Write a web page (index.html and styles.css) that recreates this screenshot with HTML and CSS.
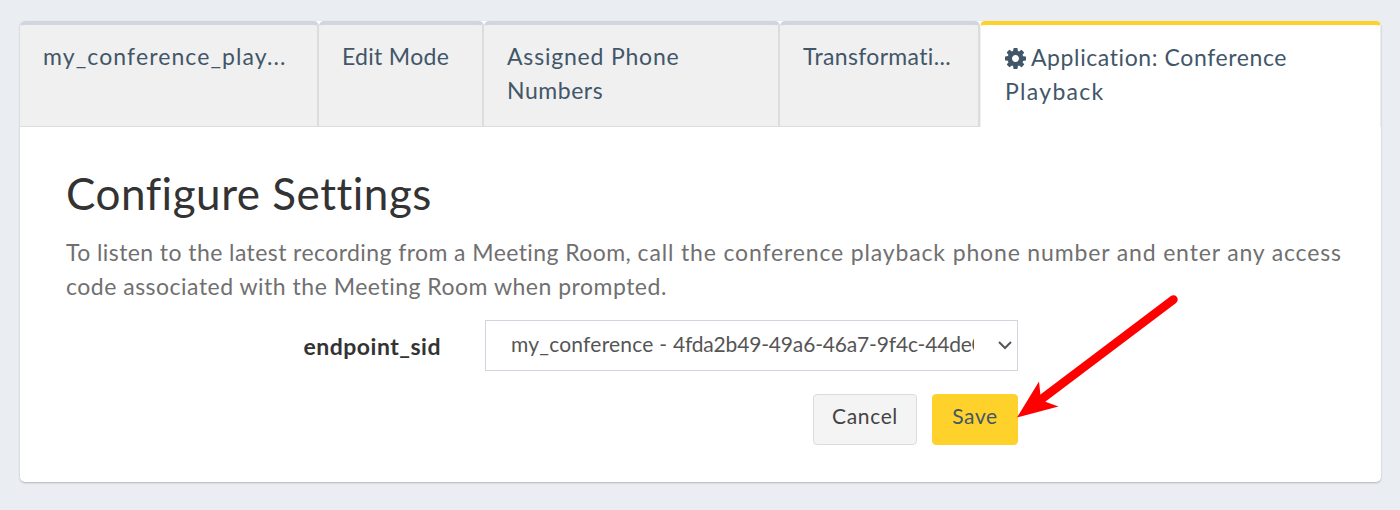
FILE: index.html
```
<!DOCTYPE html>
<html lang="en">
<head>
    <meta charset="UTF-8">
    <meta name="viewport" content="width=device-width, initial-scale=1.0">
    <title>Conference Playback</title>
    <link rel="stylesheet" href="styles.css">
</head>
<body>
    <div class="panel">
        <ul class="tabs">
            <li class="tab tab-name"><span>my_conference_play...</span></li>
            <li class="tab tab-mode"><span>Edit Mode</span></li>
            <li class="tab tab-numbers"><span class="assigned">Assigned Phone</span><br><span class="numbers">Numbers</span></li>
            <li class="tab tab-transform"><span>Transformati...</span></li>
            <li class="tab tab-app active">
                <svg class="cog" viewBox="128 128 1536 1536"><path d="M1152 896q0-106-75-181t-181-75-181 75-75 181 75 181 181 75 181-75 75-181zm512-109v222q0 12-8 23t-20 13l-185 28q-19 54-39 91 35 50 107 138 10 12 10 25t-9 23q-27 37-99 108t-94 71q-12 0-26-9l-138-108q-44 23-91 38-16 136-29 186-7 28-36 28h-222q-14 0-24.5-8.5t-11.5-21.5l-28-184q-49-16-90-37l-141 107q-10 9-25 9-14 0-25-11-126-114-165-168-7-10-7-23 0-12 8-23 15-21 51-66.5t54-70.5q-27-50-41-99l-183-27q-13-2-21-12.5t-8-23.5v-222q0-12 8-23t19-13l186-28q14-46 39-92-40-57-107-138-10-12-10-24 0-10 9-23 26-36 98.5-107.5t94.5-71.5q13 0 26 10l138 107q44-23 91-38 16-136 29-186 7-28 36-28h222q14 0 24.5 8.5t11.5 21.5l28 184q49 16 90 37l142-107q9-9 24-9 13 0 25 10 129 119 165 170 7 8 7 22 0 12-8 23-15 21-51 66.5t-54 70.5q26 50 41 98l183 28q13 2 21 12.5t8 23.5z"/></svg><span class="app">Application: Conference</span><br><span class="playback">Playback</span>
            </li>
        </ul>
        <div class="content">
            <h1>Configure Settings</h1>
            <p><span class="intro">To listen to the latest recording from a Meeting Room, </span><span class="line1">call the conference playback phone number and enter any access</span><br><span class="line2">code associated with the Meeting Room when prompted.</span></p>
            <form class="settings">
                <div class="row">
                    <label>endpoint_sid</label>
                    <div class="select">
                        <div class="value">my_conference - <span class="sid">4fda2b49-49a6-46a7-9f4c-44de0</span></div>
                        <svg class="chevron" viewBox="0 0 14 9"><path d="M1 1l6 6 6-6"/></svg>
                    </div>
                </div>
                <div class="buttons">
                    <button type="button" class="btn cancel">Cancel</button>
                    <button type="button" class="btn save">Save</button>
                </div>
            </form>
        </div>
    </div>
    <svg class="arrow" viewBox="0 0 170 130">
        <path class="shaft" d="M163.500 9.500L33 108"/>
        <path class="head" d="M7 127.500L29 91.500 30.500 105.500 36 112 48.500 116.500z"/>
    </svg>
</body>
</html>
```

FILE: styles.css
```
* {
    box-sizing: border-box;
}
body {
    margin: 0;
    padding: 21px 18px 0 20px;
    height: 510px;
    overflow: hidden;
    background-color: #eaeef3;
    font: 23px/34px Lato, "Open Sans", sans-serif;
    font-variant-ligatures: none;
    color: #333;
}
.panel {
    width: 1361px;
    height: 461px;
    background-color: white;
    border-radius: 5px;
    box-shadow: 0 1px 2px rgba(0, 0, 0, 0.25);
}
.tabs {
    display: flex;
    height: 106px;
    margin: 0;
    padding: 0;
    list-style: none;
    color: #425669;
}
.tab {
    flex: none;
    padding: 14px 0 0 23px;
    background-color: #f0f0f0;
    border-top: 4px solid #d1d5df;
    border-right: 2px solid #dcdcdc;
    border-bottom: 1px solid #dcdcdc;
    border-radius: 5px 5px 0 0;
    white-space: nowrap;
}
.tab-name {
    width: 299px;
    letter-spacing: 1.1px;
}
.tab-mode {
    width: 165px;
    letter-spacing: 0.3px;
}
.tab-numbers {
    width: 296px;
}
.assigned {
    letter-spacing: 0.8px;
}
.numbers {
    letter-spacing: 0.55px;
}
.tab-transform {
    width: 200px;
    letter-spacing: 0.35px;
}
.tab-app {
    width: 401px;
    padding: 15px 0 0 24px;
}
.app {
    letter-spacing: 0.6px;
}
.playback {
    letter-spacing: 1.3px;
}
.tab.active {
    background-color: white;
    border-top-color: #ffd12b;
    border-left: 1px solid #f0f0f0;
    border-right: 1px solid #ececec;
    border-bottom: none;
}
.cog {
    width: 21px;
    height: 21px;
    margin-right: 5px;
    vertical-align: -3px;
    fill: #425669;
}
.content {
    padding: 41px 46px 0;
}
h1 {
    margin: 0 0 16px;
    font-size: 44px;
    line-height: 51px;
    font-weight: 400;
    letter-spacing: 0.52px;
}
p {
    margin: 0;
    color: #707070;
    white-space: nowrap;
}
.intro {
    letter-spacing: 0.42px;
}
.line1 {
    letter-spacing: 0.85px;
}
.line2 {
    letter-spacing: 0.5px;
}
.settings {
    width: 952px;
    margin-top: 17px;
}
.row {
    display: flex;
    justify-content: flex-end;
    gap: 44px;
}
label {
    padding-top: 9px;
    font-weight: 700;
    letter-spacing: 0.5px;
}
.select {
    display: flex;
    align-items: center;
    justify-content: space-between;
    width: 533px;
    height: 51px;
    padding: 0 5px 0 25px;
    border: 1px solid #d1d5df;
    font-size: 21px;
    color: #555;
}
.value {
    width: 463px;
    margin-top: -3px;
    overflow: hidden;
    white-space: nowrap;
    letter-spacing: 0.22px;
}
.sid {
    letter-spacing: -0.17px;
}
.chevron {
    width: 14px;
    height: 9px;
    fill: none;
    stroke: #555;
    stroke-width: 2;
}
.buttons {
    display: flex;
    justify-content: flex-end;
    gap: 15px;
    margin-top: 23px;
}
.btn {
    height: 51px;
    padding: 0 0 9px;
    border: 1px solid #dcdcdc;
    border-radius: 4px;
    font: 21px Lato, "Open Sans", sans-serif;
    letter-spacing: 0.65px;
}
.cancel {
    width: 104px;
    background-color: #f4f4f4;
    color: #444;
}
.save {
    width: 86px;
    background-color: #ffd12b;
    border-color: #ffd12b;
    color: #425669;
}
.arrow {
    position: absolute;
    left: 1010px;
    top: 290px;
    width: 170px;
    height: 130px;
}
.shaft {
    fill: none;
    stroke: red;
    stroke-width: 8.5;
    stroke-linecap: round;
}
.head {
    fill: red;
}
```
